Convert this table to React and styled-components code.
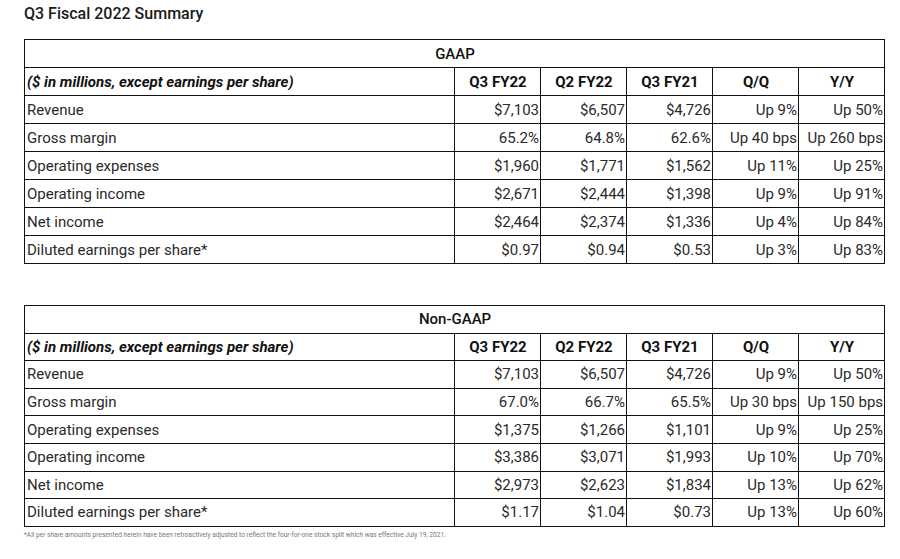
import React from 'react';
import styled, { createGlobalStyle } from 'styled-components';

const GlobalStyle = createGlobalStyle`
  body {
    margin: 0;
    background: #fff;
    font-family: Roboto, "Liberation Sans", sans-serif;
    color: #222;
  }
`;

const Page = styled.div`
  width: 900px;
  height: 559px;
  padding: 4px 0 0 24px;
  box-sizing: border-box;
`;

const Title = styled.h1`
  margin: 0 0 15px;
  font-size: 16px;
  font-weight: 500;
  line-height: 20px;
  color: #1a1a1a;
`;

const Table = styled.table`
  border-collapse: collapse;
  table-layout: fixed;
  width: 861px;
  margin-bottom: ${p => p.$gap || 0}px;
  border: 1px solid #111;

  td, th {
    height: ${p => p.$rowH}px;
    padding: 0 1px 0 2px;
    border: 1px solid #111;
    font-size: 15px;
    line-height: 18px;
    white-space: nowrap;
    box-sizing: border-box;
  }
`;

const LabelCol = styled.col`
  width: 430px;
`;

const DataCol = styled.col`
  width: 86px;
`;

const GroupHead = styled.th`
  font-weight: 500;
  text-align: center;
  color: #111;
`;

const ColHead = styled.th`
  font-weight: 700;
  text-align: ${p => (p.$left ? 'left' : 'center')};
  font-style: ${p => (p.$left ? 'italic' : 'normal')};
  color: #111;
`;

const Label = styled.td`
  text-align: left;
  color: #2a2a2a;
`;

const Value = styled.td`
  text-align: right;
  color: #2a2a2a;
`;

const Footnote = styled.p`
  margin: 4px 0 0;
  font-size: 6.6px;
  line-height: 8px;
  color: #777;
`;

const columns = ['Q3 FY22', 'Q2 FY22', 'Q3 FY21', 'Q/Q', 'Y/Y'];

const gaap = [
  ['Revenue', '$7,103', '$6,507', '$4,726', 'Up 9%', 'Up 50%'],
  ['Gross margin', '65.2%', '64.8%', '62.6%', 'Up 40 bps', 'Up 260 bps'],
  ['Operating expenses', '$1,960', '$1,771', '$1,562', 'Up 11%', 'Up 25%'],
  ['Operating income', '$2,671', '$2,444', '$1,398', 'Up 9%', 'Up 91%'],
  ['Net income', '$2,464', '$2,374', '$1,336', 'Up 4%', 'Up 84%'],
  ['Diluted earnings per share*', '$0.97', '$0.94', '$0.53', 'Up 3%', 'Up 83%'],
];

const nonGaap = [
  ['Revenue', '$7,103', '$6,507', '$4,726', 'Up 9%', 'Up 50%'],
  ['Gross margin', '67.0%', '66.7%', '65.5%', 'Up 30 bps', 'Up 150 bps'],
  ['Operating expenses', '$1,375', '$1,266', '$1,101', 'Up 9%', 'Up 25%'],
  ['Operating income', '$3,386', '$3,071', '$1,993', 'Up 10%', 'Up 70%'],
  ['Net income', '$2,973', '$2,623', '$1,834', 'Up 13%', 'Up 62%'],
  ['Diluted earnings per share*', '$1.17', '$1.04', '$0.73', 'Up 13%', 'Up 60%'],
];

function SummaryTable({ heading, rows, rowH, gap }) {
  return (
    <Table $rowH={rowH} $gap={gap}>
      <colgroup>
        <LabelCol />
        {columns.map(c => <DataCol key={c} />)}
      </colgroup>
      <thead>
        <tr>
          <GroupHead colSpan={6}>{heading}</GroupHead>
        </tr>
        <tr>
          <ColHead $left>($ in millions, except earnings per share)</ColHead>
          {columns.map(c => <ColHead key={c}>{c}</ColHead>)}
        </tr>
      </thead>
      <tbody>
        {rows.map(([label, ...vals]) => (
          <tr key={label}>
            <Label>{label}</Label>
            {vals.map((v, i) => <Value key={i}>{v}</Value>)}
          </tr>
        ))}
      </tbody>
    </Table>
  );
}

export default function App() {
  return (
    <Page>
      <GlobalStyle />
      <Title>Q3 Fiscal 2022 Summary</Title>
      <SummaryTable heading="GAAP" rows={gaap} rowH={28} gap={41} />
      <SummaryTable heading="Non-GAAP" rows={nonGaap} rowH={27.6} />
      <Footnote>
        *All per share amounts presented herein have been retroactively adjusted to reflect the four-for-one stock split which was effective July 19, 2021.
      </Footnote>
    </Page>
  );
}
